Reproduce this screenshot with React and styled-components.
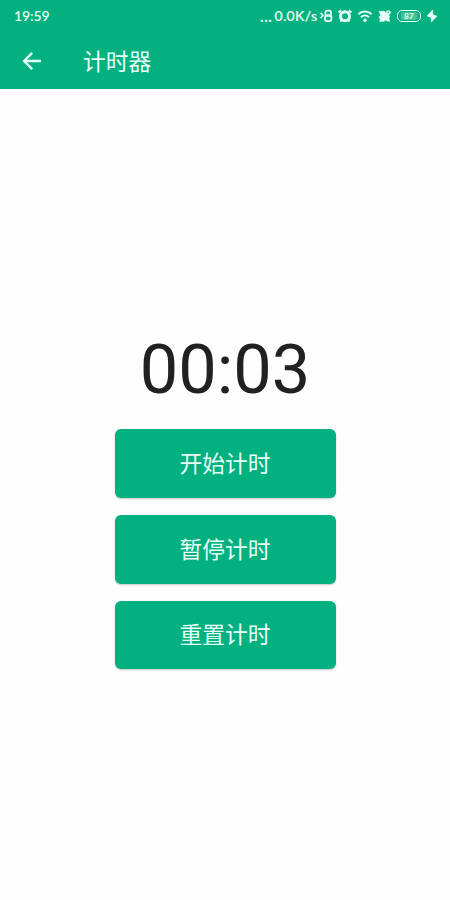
import { styled, createGlobalStyle } from "styled-components";

const buttons = ["开始计时", "暂停计时", "重置计时"];

function BluetoothIcon() {
  return (
    <Icon width="13" height="14" viewBox="0 0 13 14">
      <path d="M.6 3.8 2.9 6.5.6 9.2" strokeWidth="1.6" />
      <rect x="5.4" y="1.6" width="5.6" height="4.9" rx="1.8" strokeWidth="1.9" />
      <rect x="5" y="6.5" width="6.4" height="5.6" rx="2" strokeWidth="1.9" />
    </Icon>
  );
}

function AlarmIcon() {
  return (
    <Icon width="14" height="14" viewBox="0 0 14 14">
      <circle cx="7" cy="7.3" r="4.5" strokeWidth="2.9" />
      <path d="M.6 3.5 3.1 1.1M13.4 3.5 10.9 1.1M3.5 11.2 2.5 12.6M10.5 11.2l1 1.4" strokeWidth="1.9" />
    </Icon>
  );
}

function WifiIcon() {
  return (
    <Icon width="16" height="14" viewBox="0 0 16 14">
      <path d="M1.4 5.2C5 1.6 11 1.6 14.6 5.2M4 8.2c2.3-2.2 5.7-2.2 8 0" strokeWidth="2" />
      <circle cx="8" cy="11.3" r="1.7" fill="currentColor" stroke="none" />
    </Icon>
  );
}

function SimIcon() {
  return (
    <Icon width="14" height="14" viewBox="0 0 14 14">
      <path
        d="M1 2.3h5.5L8 3.8l1-2h2.7l1.1 1.7-.9 1.6-1.4.7 1.2 1.7-.8 1.8.9 3H9.4L8 11.1l-2.6 1.4H1.5l.8-2.6L.8 8.2l1.7-2z"
        fill="currentColor"
        strokeWidth=".5"
      />
      <path d="M9.4 3.8 11 2.9" stroke="#03b07f" strokeWidth="1" />
    </Icon>
  );
}

function BoltIcon() {
  return (
    <Icon width="12" height="14" viewBox="0 0 12 14">
      <path d="M6.6 1v4.4l4.2 1.9-5.4 5.7V8.6L1.2 6.9z" fill="currentColor" strokeWidth=".8" />
    </Icon>
  );
}

function App() {
  return (
    <Page>
      <GlobalStyle />
      <Header>
        <StatusBar>
          <Time>19:59</Time>
          <Dots>...</Dots>
          <Speed>0.0K/s</Speed>
          <Icons>
            <BluetoothIcon />
            <AlarmIcon />
            <WifiIcon />
            <SimIcon />
            <Battery>
              <Level>87</Level>
            </Battery>
            <BoltIcon />
          </Icons>
        </StatusBar>
        <Toolbar>
          <Back aria-label="返回">
            <Icon width="20" height="20" viewBox="0 0 20 20">
              <path d="M19 10H2.5M10.2 1.9 2.1 10l8.1 8.1" strokeWidth="2.3" strokeLinecap="butt" />
            </Icon>
          </Back>
          <Title>计时器</Title>
        </Toolbar>
      </Header>
      <Main>
        <Timer>00:03</Timer>
        <Buttons>
          {buttons.map((text) => (
            <Button key={text}>{text}</Button>
          ))}
        </Buttons>
      </Main>
    </Page>
  );
}

const GlobalStyle = createGlobalStyle`
  * {
    box-sizing: border-box;
  }

  body {
    margin: 0;
    background: #fdfdfd;
  }
`;

const Page = styled.div`
  width: 450px;
  height: 900px;
  display: flex;
  flex-direction: column;
  overflow: hidden;
  background: #fdfdfd;
  font-family: Roboto, "Noto Sans CJK SC", sans-serif;
`;

const Header = styled.header`
  height: 89px;
  flex-shrink: 0;
  background: #03b07f;
  color: #e6fff6;
`;

const StatusBar = styled.div`
  height: 32px;
  display: flex;
  align-items: center;
  padding: 0 12px 0 14px;
  font-family: Lato, sans-serif;
  line-height: 20px;
`;

const Time = styled.span`
  width: 246px;
  flex-shrink: 0;
  font-size: 14px;
  font-weight: 600;
  letter-spacing: -0.1px;
`;

const Dots = styled.span`
  width: 14.5px;
  flex-shrink: 0;
  font-size: 15px;
  font-weight: 700;
  letter-spacing: 0.6px;
`;

const Speed = styled.span`
  width: 45.5px;
  flex-shrink: 0;
  font-size: 14px;
  font-weight: 500;
  letter-spacing: 0.35px;
  white-space: nowrap;
  -webkit-text-stroke: 0.2px currentColor;
`;

const Icons = styled.div`
  display: flex;
  align-items: center;
  gap: 5px;
`;

const Icon = styled.svg`
  display: block;
  flex-shrink: 0;
  fill: none;
  stroke: currentColor;
`;

const Battery = styled.div`
  width: 24px;
  height: 12px;
  flex-shrink: 0;
  display: flex;
  align-items: center;
  justify-content: center;
  border: 1.5px solid currentColor;
  border-radius: 5px;
`;

const Level = styled.span`
  width: 16px;
  height: 8px;
  border-radius: 2px;
  background: #45c39b;
  font-size: 8px;
  font-weight: 700;
  line-height: 8px;
  text-align: center;
`;

const Toolbar = styled.div`
  height: 57px;
  display: flex;
  align-items: center;
  padding-left: 22px;
`;

const Back = styled.button`
  width: 61px;
  padding: 0;
  border: 0;
  background: none;
  color: inherit;
`;

const Title = styled.h1`
  margin: 0;
  padding-top: 4px;
  font-size: 22.8px;
  font-weight: 400;
  line-height: 32px;
`;

const Main = styled.main`
  flex: 1;
  display: flex;
  flex-direction: column;
  align-items: center;
  padding-top: 240px;
`;

const Timer = styled.div`
  height: 100px;
  color: #212121;
  font-size: 68.5px;
  line-height: 81px;
`;

const Buttons = styled.div`
  display: flex;
  flex-direction: column;
  gap: 17px;
`;

const Button = styled.button`
  width: 221px;
  height: 68.8px;
  padding: 3px 0 0;
  border: 0;
  border-radius: 6px;
  background: #03b07f;
  box-shadow: 0 1px 2px rgba(0, 0, 0, 0.22);
  color: #e6fff6;
  font-family: inherit;
  font-size: 22.8px;
  line-height: 32px;
`;

export default App;
